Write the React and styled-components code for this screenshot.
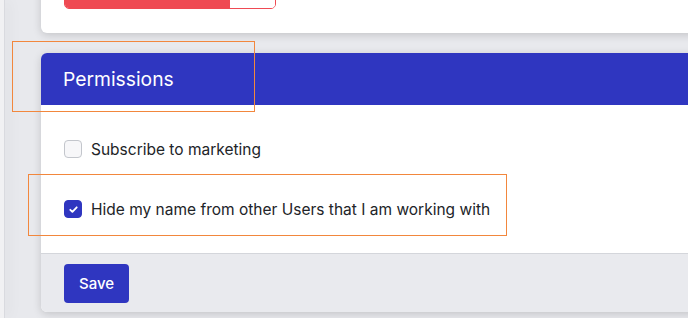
import React from 'react';
import styled, { createGlobalStyle } from 'styled-components';

const GlobalStyle = createGlobalStyle`
  html, body {
    margin: 0;
    padding: 0;
    background: #e8e9ed;
    font-family: Inter, "Liberation Sans", Arial, sans-serif;
    -webkit-font-smoothing: antialiased;
  }
`;

const Shell = styled.div`
  position: relative;
  display: flex;
  width: 688px;
  height: 318px;
  overflow: hidden;
`;

const SideEdge = styled.div`
  width: 4px;
  flex: none;
  background: #f1f1f3;
  box-shadow: 1px 0 0 #d9dadf, 4px 0 14px rgba(0, 0, 0, 0.08);
`;

const Main = styled.div`
  flex: 1;
  display: flex;
  flex-direction: column;
  gap: 20px;
  padding-left: 37px;
  margin-right: -10px;
`;

const Card = styled.section`
  background: #fff;
  border-radius: 6px;
  box-shadow: 0 2px 8px rgba(0, 0, 0, 0.16);
  overflow: hidden;
  margin-top: ${p => p.$offset || 0};
`;

const TopBody = styled.div`
  padding: 0 23px 24px;
`;

const ButtonGroup = styled.div`
  display: flex;
  width: 210px;
  height: 40px;
  border: 1px solid #ef4a53;
  border-radius: 5px;
  overflow: hidden;
`;

const Segment = styled.div`
  flex: ${p => (p.$filled ? '0 0 165px' : '1')};
  background: ${p => (p.$filled ? '#ef4a53' : '#fff')};
`;

const Header = styled.header`
  height: 52px;
  display: flex;
  align-items: center;
  padding: 0 22px;
  background: #2f36c0;
  color: #fff;
  font-size: 19.3px;
  font-weight: 400;
`;

const Body = styled.div`
  display: flex;
  flex-direction: column;
  gap: 36px;
  padding: 32px 23px 32px;
`;

const Row = styled.label`
  display: flex;
  align-items: center;
  gap: 9px;
  height: 24px;
  font-size: 15.5px;
  color: #222428;
`;

const Box = styled.span`
  width: 18px;
  height: 18px;
  box-sizing: border-box;
  border-radius: 4px;
  display: flex;
  align-items: center;
  justify-content: center;
  background: ${p => (p.$checked ? '#2f36c0' : '#f7f7f9')};
  border: 1px solid ${p => (p.$checked ? '#2f36c0' : '#c3c6cc')};
`;

const Footer = styled.footer`
  background: #e9eaee;
  border-top: 1px solid #d4d6db;
  padding: 10px 23px 9px;
`;

const SaveButton = styled.button`
  height: 39px;
  padding: 0 15px;
  border: none;
  border-radius: 4px;
  background: #2f36c0;
  color: #fff;
  font-family: inherit;
  font-size: 15px;
  font-weight: 500;
`;

const Marker = styled.div`
  position: absolute;
  border: 1px solid #f2873d;
  box-sizing: border-box;
  pointer-events: none;
`;

const Checkbox = ({ checked }) => (
  <Box $checked={checked}>
    {checked && (
      <svg width="11" height="11" viewBox="0 0 12 12">
        <path d="M2.5 6.3l2.3 2.3 4.7-5" fill="none" stroke="#fff" strokeWidth="2" strokeLinecap="round" strokeLinejoin="round" />
      </svg>
    )}
  </Box>
);

export default function App() {
  return (
    <>
      <GlobalStyle />
      <Shell>
        <SideEdge />
        <Main>
          <Card $offset="-33px">
            <TopBody>
              <ButtonGroup>
                <Segment $filled />
                <Segment />
              </ButtonGroup>
            </TopBody>
          </Card>

          <Card>
            <Header>Permissions</Header>
            <Body>
              <Row>
                <Checkbox />
                Subscribe to marketing
              </Row>
              <Row>
                <Checkbox checked />
                Hide my name from other Users that I am working with
              </Row>
            </Body>
            <Footer>
              <SaveButton>Save</SaveButton>
            </Footer>
          </Card>
        </Main>

        <Marker style={{ left: 12, top: 41, width: 243, height: 71 }} />
        <Marker style={{ left: 28, top: 174, width: 479, height: 62 }} />
      </Shell>
    </>
  );
}
